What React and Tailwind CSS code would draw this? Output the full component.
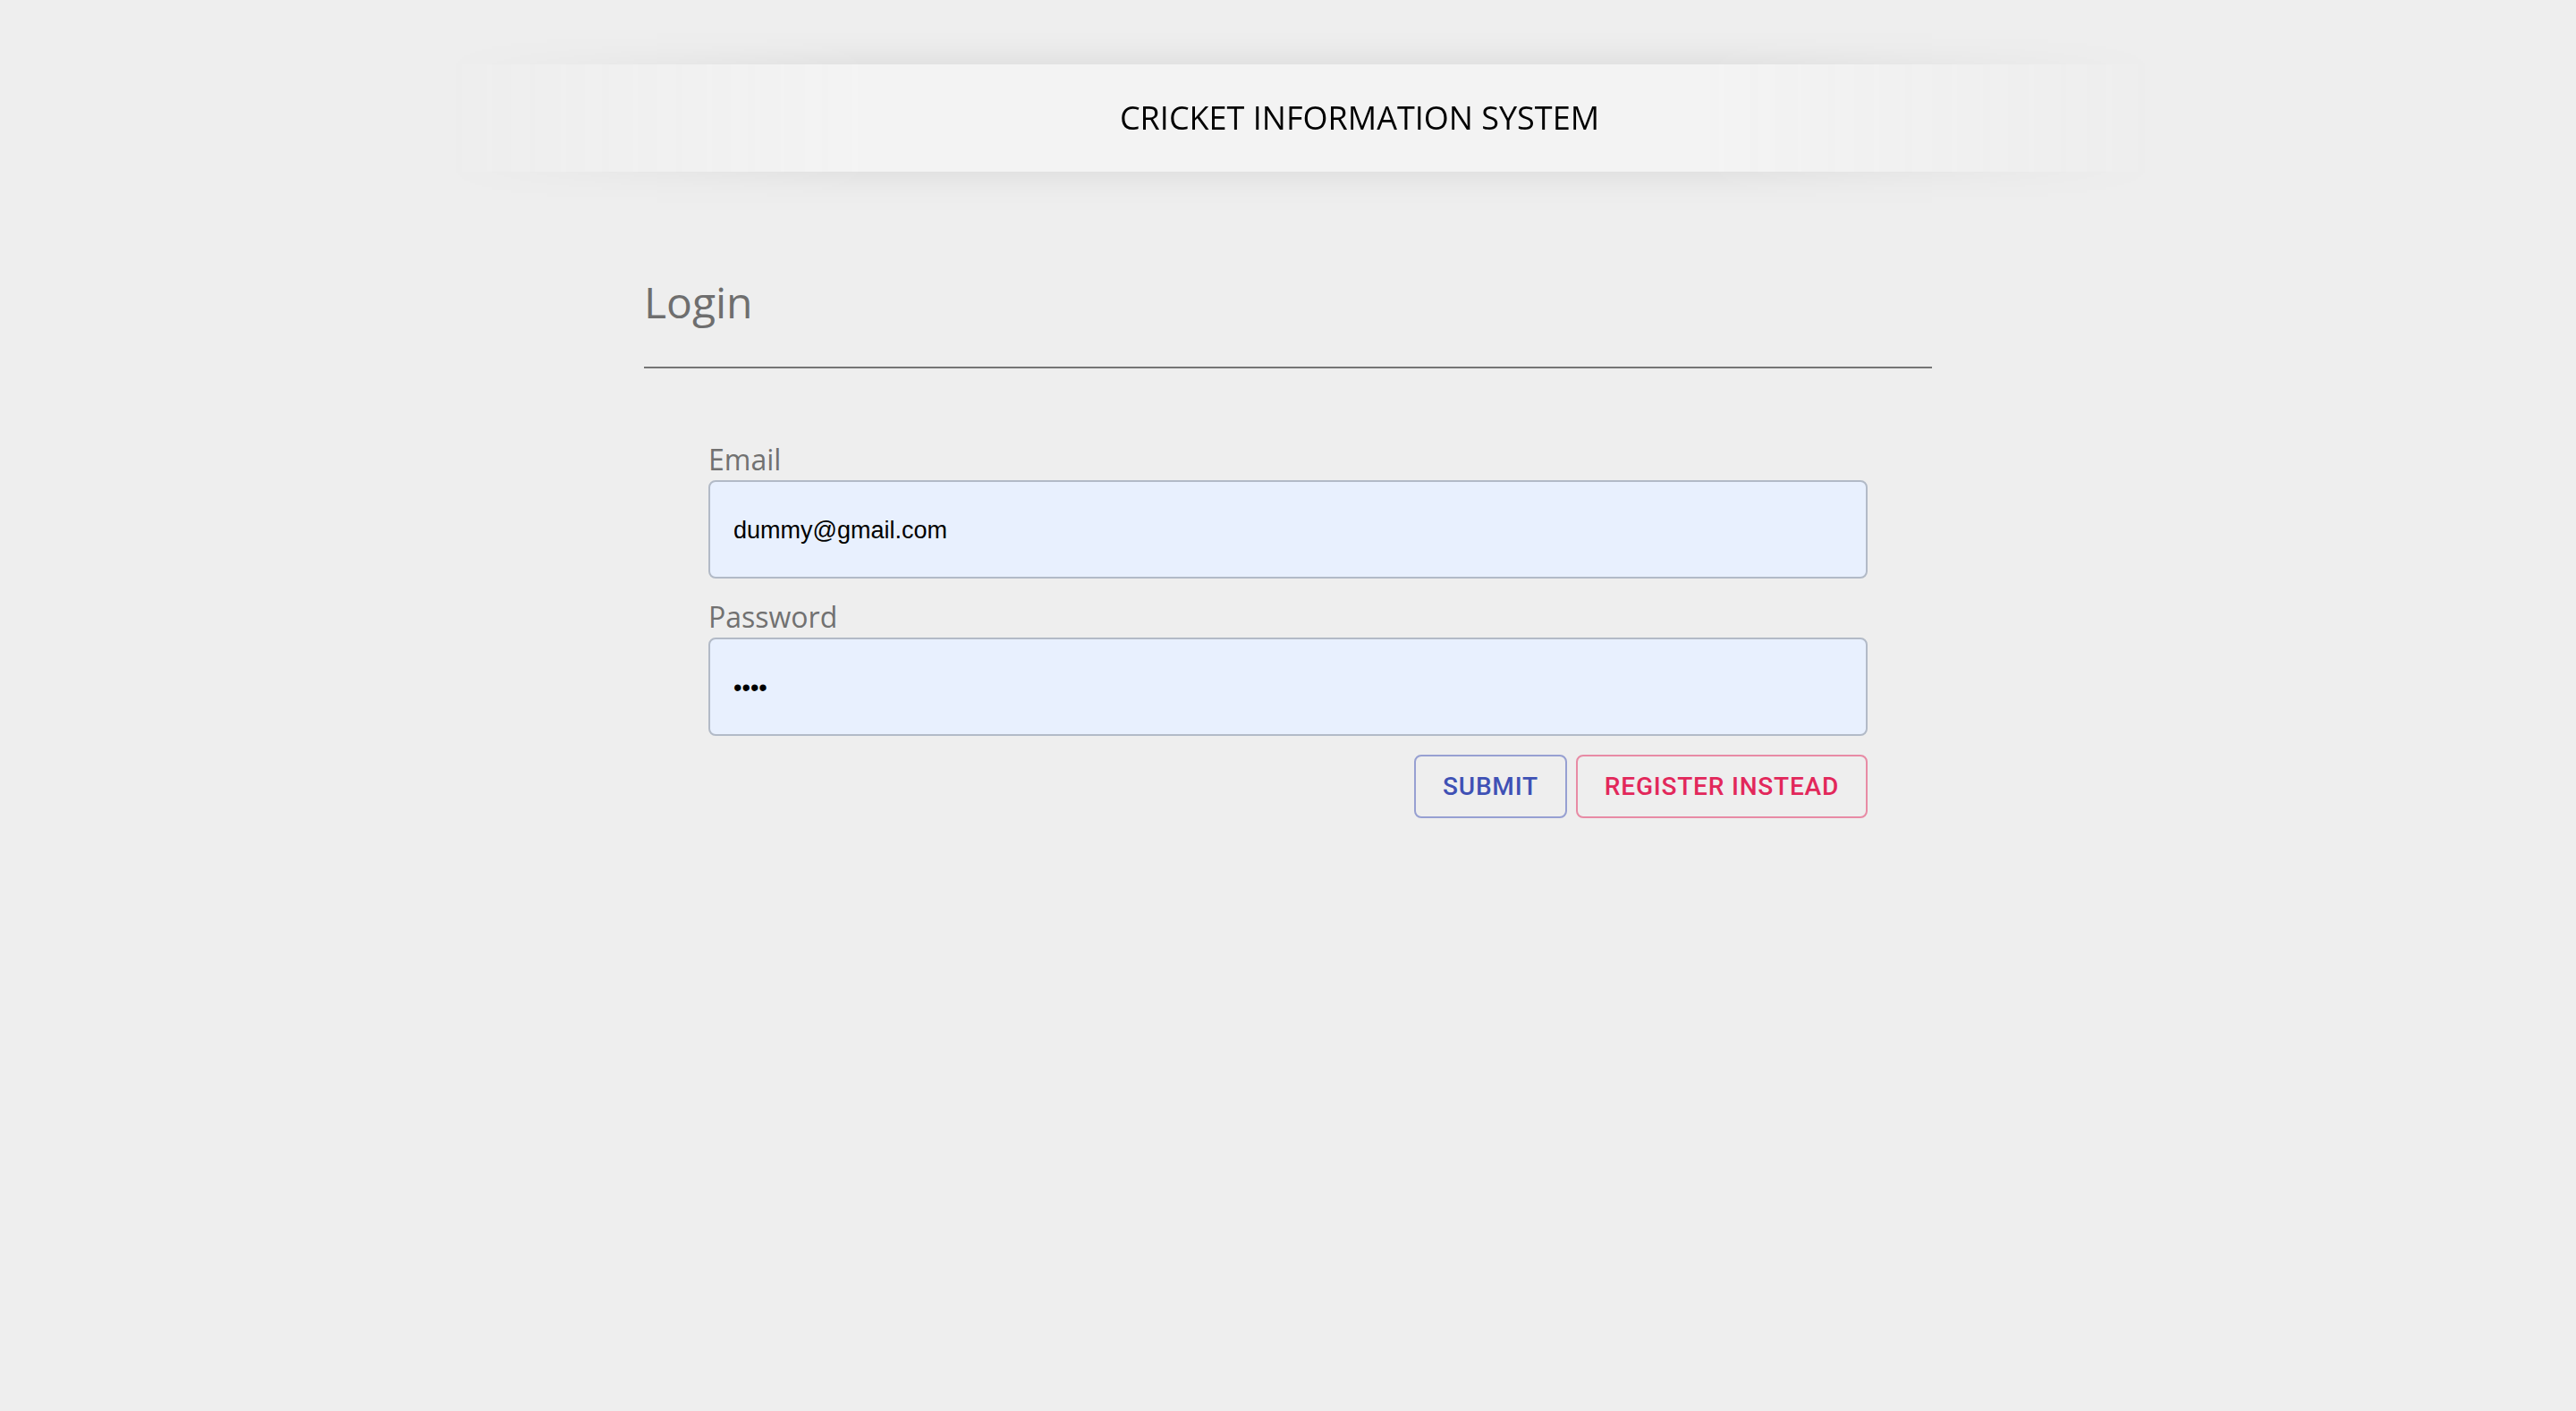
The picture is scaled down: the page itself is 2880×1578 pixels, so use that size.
import { useState } from 'react'

// Login page for the cricket information system
function Header() {
  return (
    <div className="pt-[72px] pb-[40px] [mask-image:linear-gradient(to_right,transparent_17%,black_34%,black_66%,transparent_84%)]">
      <header className="flex h-[120px] items-center justify-center bg-[#f3f3f3] pl-[160px] shadow-[0_0_40px_rgba(0,0,0,0.1)]">
        <h1 className="text-[36px] leading-none text-black">CRICKET INFORMATION SYSTEM</h1>
      </header>
    </div>
  )
}

function Field({ label, type = 'text', value, onChange }) {
  return (
    <label className="block">
      <span className="block text-[32px] leading-none text-[#717171]">{label}</span>
      <input
        type={type}
        value={value}
        onChange={onChange}
        className="mt-[7px] block h-[110px] w-full rounded-[8px] border-2 border-[#b2bac7] bg-[#e8f0fe] px-[26px] pt-[2px] text-[27px] text-black outline-none"
        style={{ fontFamily: '"Liberation Sans", Arial, sans-serif' }}
      />
    </label>
  )
}

export default function App() {
  const [email, setEmail] = useState('dummy@gmail.com')
  const [password, setPassword] = useState('1234')

  return (
    <div className="min-h-screen bg-[#eeeeee]" style={{ fontFamily: '"Open Sans", "Noto Sans", sans-serif' }}>
      <Header />

      <main className="mx-auto w-[1440px]">
        <div className="mt-[82px] border-b-2 border-[#757575] pb-[48px]">
          <h2 className="text-[48px] font-medium leading-none text-[#6e6e6e]">Login</h2>
        </div>

        <form className="px-[72px] pt-[86px]" onSubmit={(e) => e.preventDefault()}>
          <Field label="Email" value={email} onChange={(e) => setEmail(e.target.value)} />
          <div className="mt-[27px]">
            <Field label="Password" type="password" value={password} onChange={(e) => setPassword(e.target.value)} />
          </div>

          <div className="mt-[21px] flex justify-end gap-[10px]" style={{ fontFamily: 'Roboto, "Liberation Sans", sans-serif' }}>
            <button
              type="submit"
              className="h-[71px] rounded-[8px] border-2 border-[#3f51b5]/50 px-[30px] text-[28px] font-medium uppercase tracking-[0.8px] text-[#3f51b5]"
            >
              Submit
            </button>
            <button
              type="button"
              className="h-[71px] rounded-[8px] border-2 border-[#e2285b]/50 px-[30px] text-[28px] font-medium uppercase tracking-[0.8px] text-[#e2285b]"
            >
              Register Instead
            </button>
          </div>
        </form>
      </main>
    </div>
  )
}
